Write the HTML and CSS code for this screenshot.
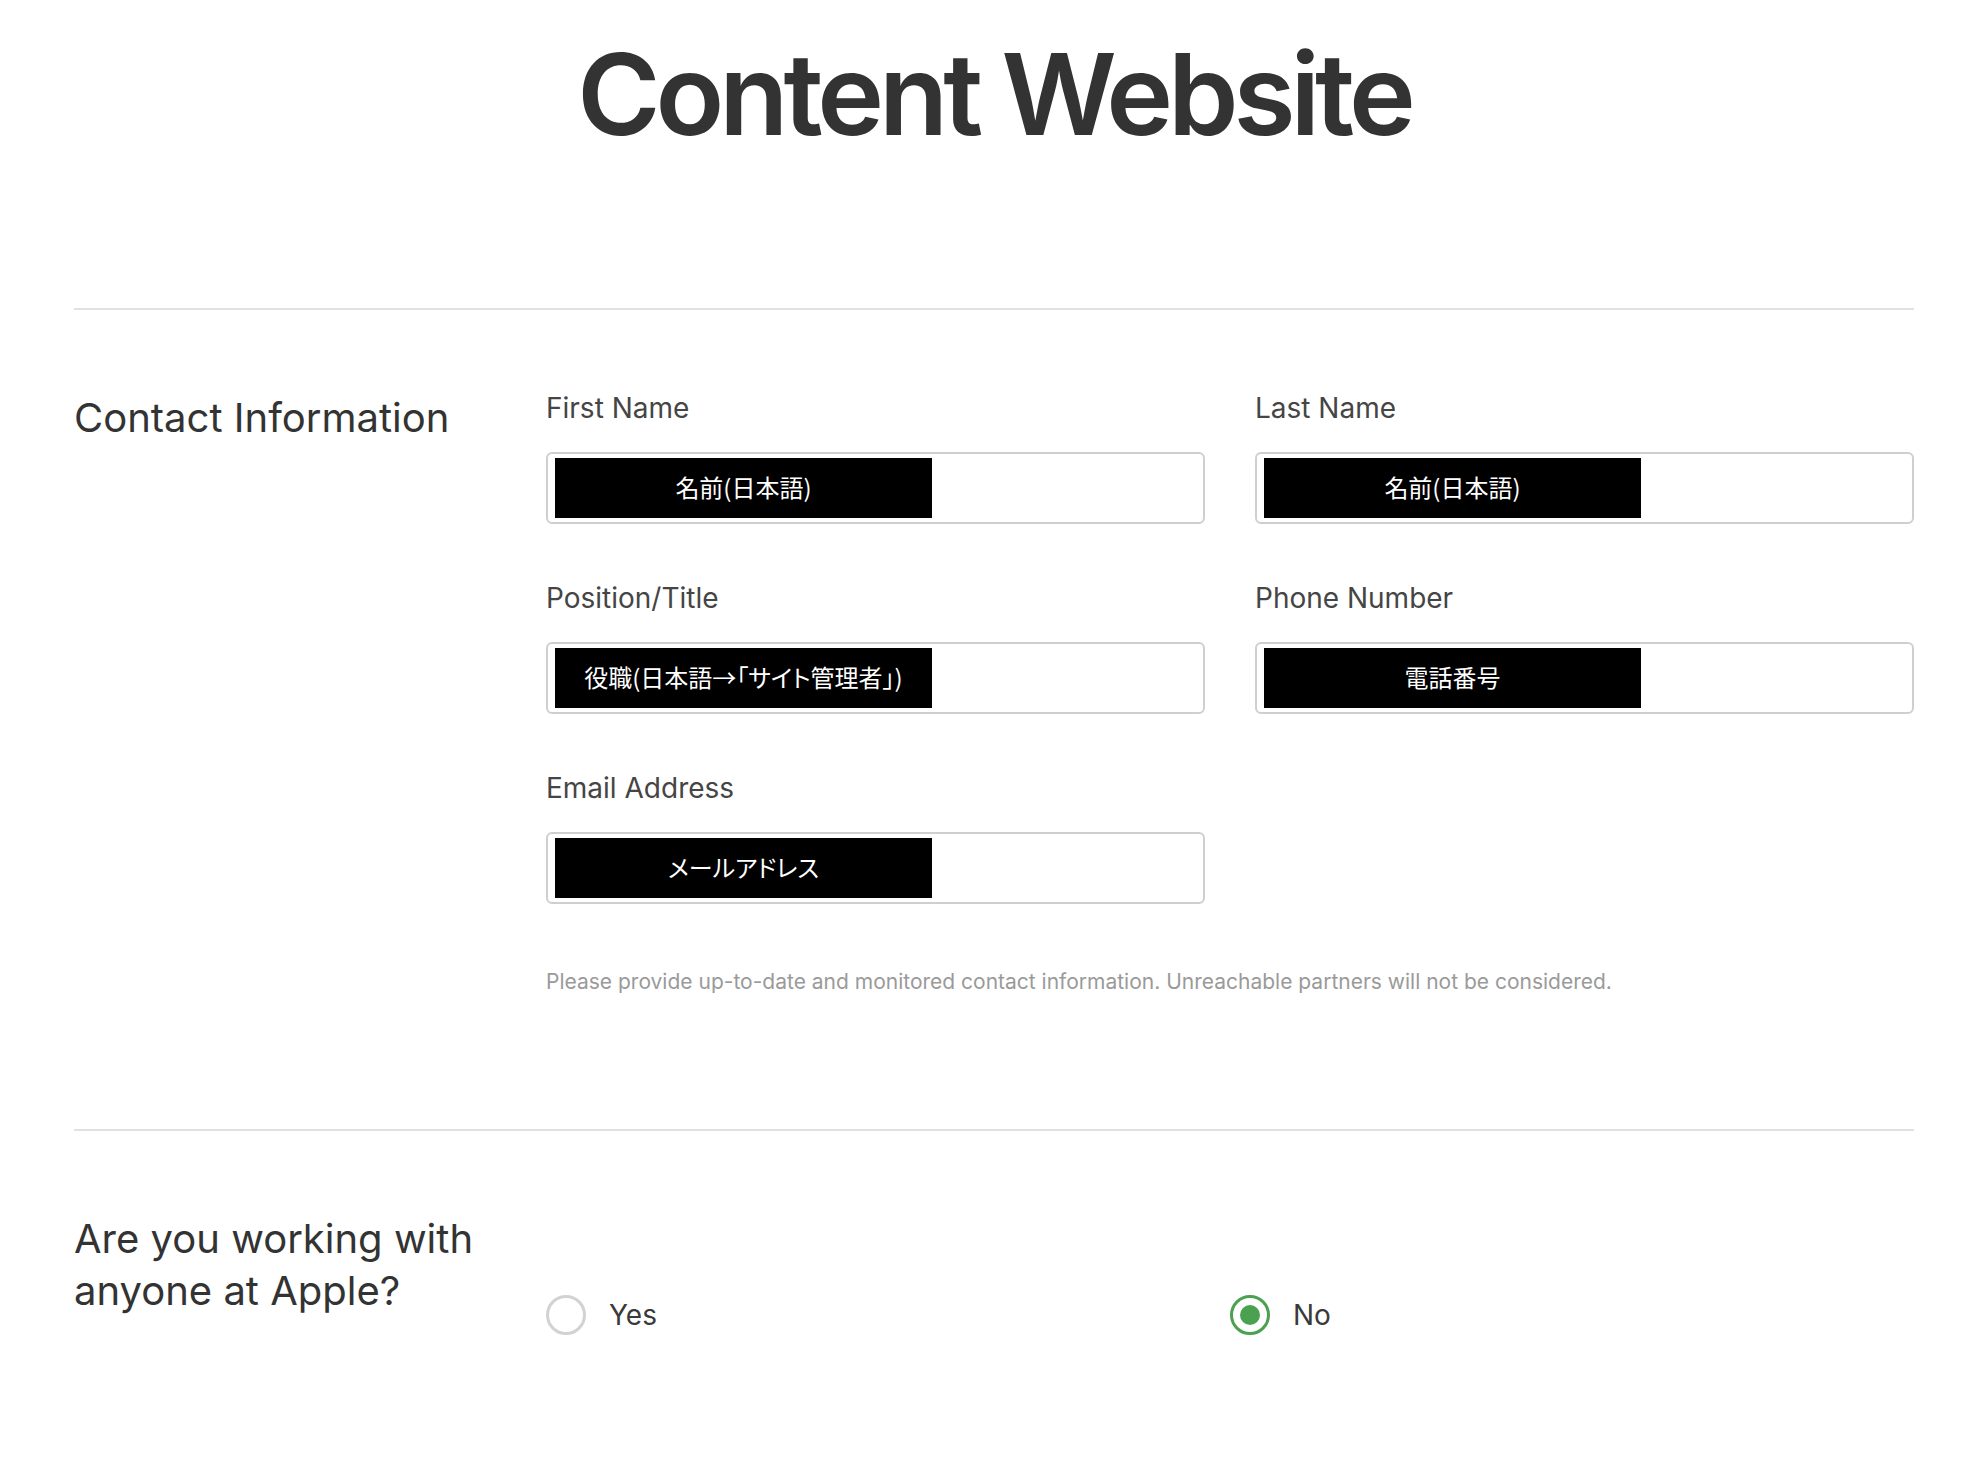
FILE: index.html
```html
<!DOCTYPE html>
<html lang="en">
<head>
<meta charset="utf-8">
<title>Content Website</title>
<link rel="stylesheet" href="styles.css">
</head>
<body>
<div class="page">
  <h1 class="title">Content Website</h1>

  <section class="section section-contact">
    <h2 class="section-title">Contact Information</h2>
    <div class="fields">
      <div class="field">
        <div class="label">First Name</div>
        <div class="input"><span class="mask">名前(日本語)</span></div>
      </div>
      <div class="field">
        <div class="label">Last Name</div>
        <div class="input"><span class="mask">名前(日本語)</span></div>
      </div>
      <div class="field">
        <div class="label">Position/Title</div>
        <div class="input"><span class="mask">役職(日本語→「サイト管理者」)</span></div>
      </div>
      <div class="field">
        <div class="label">Phone Number</div>
        <div class="input"><span class="mask">電話番号</span></div>
      </div>
      <div class="field">
        <div class="label">Email Address</div>
        <div class="input"><span class="mask">メールアドレス</span></div>
      </div>
      <p class="help">Please provide up-to-date and monitored contact information. Unreachable partners will not be considered.</p>
    </div>
  </section>

  <section class="section section-apple">
    <h2 class="section-title">Are you working with anyone at Apple?</h2>
    <div class="radios">
      <label class="radio"><span class="radio-circle"></span><span class="radio-text">Yes</span></label>
      <label class="radio checked"><span class="radio-circle"></span><span class="radio-text">No</span></label>
    </div>
  </section>
</div>
</body>
</html>
```

FILE: styles.css
```css
* { box-sizing: border-box; }

html, body {
  margin: 0;
  padding: 0;
  background: #ffffff;
}

body {
  font-family: Inter, "Noto Sans CJK JP", sans-serif;
  color: #333333;
}

.page {
  padding: 0 74px;
}

.title {
  margin: 26px 0 0;
  text-align: center;
  font-size: 113px;
  font-weight: 600;
  line-height: 137px;
  letter-spacing: -5px;
  color: #333333;
}

.section {
  margin-top: 145px;
  border-top: 2px solid #e1e1e1;
  display: grid;
  grid-template-columns: 472px 1fr;
  padding-top: 82px;
}

.section-contact {
  padding-bottom: 133px;
}

.section-apple {
  margin-top: 0;
}

.section-title {
  margin: 0;
  font-size: 40px;
  font-weight: 400;
  line-height: 52px;
  color: #333333;
}

.fields {
  display: grid;
  grid-template-columns: 1fr 1fr;
  column-gap: 50px;
  row-gap: 58px;
}

.label {
  font-size: 28px;
  line-height: 32px;
  color: #454545;
  margin-bottom: 28px;
}

.input {
  height: 72px;
  border: 2px solid #cfcfcf;
  border-radius: 6px;
  padding: 4px 7px;
  display: flex;
}

.mask {
  width: 377px;
  height: 60px;
  padding-bottom: 4px;
  background: #000000;
  color: #ffffff;
  display: flex;
  align-items: center;
  justify-content: center;
  font-family: "Noto Sans CJK JP", sans-serif;
  font-feature-settings: "palt" 1;
  font-size: 24px;
  white-space: nowrap;
}

.help {
  grid-column: 1 / -1;
  margin: 6px 0 0;
  font-size: 21px;
  line-height: 28px;
  color: #9a9a9a;
}

.radios {
  display: grid;
  grid-template-columns: 1fr 1fr;
  margin-top: 82px;
  align-self: start;
}

.radio {
  display: flex;
  align-items: center;
  gap: 23px;
  font-size: 28px;
  color: #3a3a3a;
}

.radio-circle {
  width: 40px;
  height: 40px;
  border-radius: 50%;
  border: 3px solid #d2d2d2;
  display: flex;
  align-items: center;
  justify-content: center;
  flex: none;
}

.radio.checked .radio-circle {
  border-color: #4aa14f;
}

.radio.checked .radio-circle::after {
  content: "";
  width: 20px;
  height: 20px;
  border-radius: 50%;
  background: #4aa14f;
}
```
